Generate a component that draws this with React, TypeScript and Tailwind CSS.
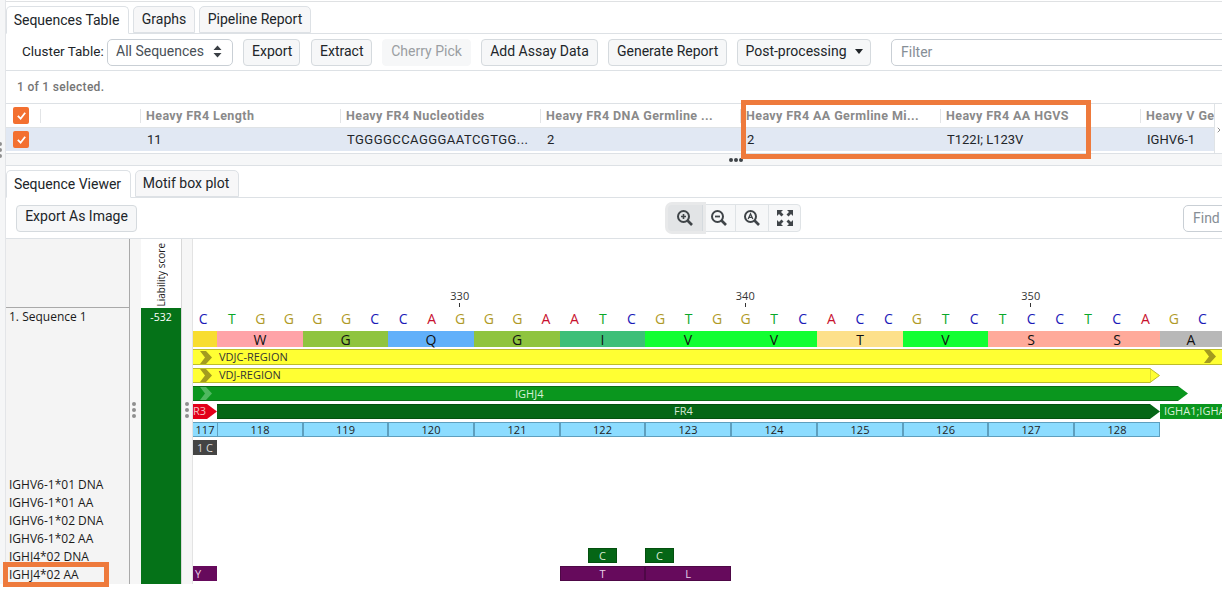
import { ChevronRight } from "lucide-react";

const nts = "CTGGGGCCAGGGAATCGTGGTCACCGTCTCCTCAGC".split("");
const ntColor: any = { C: "text-[#1a1ab8]", T: "text-[#0aa82a]", G: "text-[#b09a28]", A: "text-[#c8102e]" };

const aminoAcids = [
  { label: "", w: "w-[24px]", color: "bg-[#f8dd30]" },
  { label: "W", w: "w-[86px]", color: "bg-[#ffa3a8]" },
  { label: "G", w: "w-[85px]", color: "bg-[#8fc43f]" },
  { label: "Q", w: "w-[86px]", color: "bg-[#61b0fa]" },
  { label: "G", w: "w-[86px]", color: "bg-[#8fc43f]" },
  { label: "I", w: "w-[85px]", color: "bg-[#3ebf78]" },
  { label: "V", w: "w-[86px]", color: "bg-[#12ff32]" },
  { label: "V", w: "w-[86px]", color: "bg-[#12ff32]" },
  { label: "T", w: "w-[86px]", color: "bg-[#fde08a]" },
  { label: "V", w: "w-[85px]", color: "bg-[#12ff32]" },
  { label: "S", w: "w-[86px]", color: "bg-[#ffaa9a]" },
  { label: "S", w: "w-[86px]", color: "bg-[#ffaa9a]" },
  { label: "A", w: "w-[62px]", color: "bg-[#b8b8b8]" },
];

const numbers = [
  { n: 118, w: "w-[86px]" },
  { n: 119, w: "w-[85px]" },
  { n: 120, w: "w-[86px]" },
  { n: 121, w: "w-[86px]" },
  { n: 122, w: "w-[85px]" },
  { n: 123, w: "w-[86px]" },
  { n: 124, w: "w-[86px]" },
  { n: 125, w: "w-[86px]" },
  { n: 126, w: "w-[85px]" },
  { n: 127, w: "w-[86px]" },
  { n: 128, w: "w-[86px]" },
];

const germlines = ["IGHV6-1*01 DNA", "IGHV6-1*01 AA", "IGHV6-1*02 DNA", "IGHV6-1*02 AA", "IGHJ4*02 DNA", "IGHJ4*02 AA"];

const Btn = ({ children, className = "", disabled = false }: any) => (
  <button className={`h-[27px] shrink-0 px-2 rounded-[4px] border text-[14px] whitespace-nowrap ${disabled ? "border-[#f6f7f8] bg-[#f6f7f8] text-[#9a9ea2]" : "border-[#d5dade] bg-[#f6f7f8] text-[#212529]"} ${className}`}>
    {children}
  </button>
);

const Tab = ({ children, active = false, className = "" }: any) => (
  <div className={`flex items-center justify-center rounded-t-[5px] border border-[#dde1e5] text-[14px] text-[#212529] ${active ? "bg-white border-b-white -mb-px h-[28px]" : "bg-[#f7f7f8] h-[27px]"} ${className}`}>
    {children}
  </div>
);

const Check = () => (
  <div className="w-[16px] h-[17px] rounded-[2px] bg-[#f37030] flex items-center justify-center">
    <svg width="11" height="11" viewBox="0 0 12 12">
      <path d="M2 6.5 L5 9.5 L10 3" fill="none" stroke="white" strokeWidth="2" />
    </svg>
  </div>
);

const Dots = ({ className = "" }: any) => (
  <div className={`flex flex-col gap-[2px] ${className}`}>
    <span className="w-[4px] h-[4px] rounded-full bg-[#8f8f8f]" />
    <span className="w-[4px] h-[4px] rounded-full bg-[#8f8f8f]" />
    <span className="w-[4px] h-[4px] rounded-full bg-[#8f8f8f]" />
  </div>
);

const Chevron = ({ color }: any) => (
  <svg width="12" height="13" viewBox="0 0 12 13" className="shrink-0">
    <path d="M0 0 H6 L12 6.5 L6 13 H0 L5 6.5 Z" fill={color} />
  </svg>
);

const Magnifier = ({ kind }: any) => (
  <svg width="18" height="18" viewBox="0 0 18 18" fill="none" stroke="#3f4448">
    <circle cx="7.5" cy="7.5" r="5.5" strokeWidth="2" />
    <path d="M11.5 11.5 L16 16" strokeWidth="2.6" />
    {kind === "in" && <path d="M5 7.5 H10 M7.5 5 V10" strokeWidth="1.6" />}
    {kind === "out" && <path d="M5 7.5 H10" strokeWidth="1.8" />}
    {kind === "fit" && <path d="M5.2 10 L7.5 4.8 L9.8 10 M6 8.4 H9" strokeWidth="1.3" />}
  </svg>
);

const Expand = () => (
  <svg width="18" height="18" viewBox="0 0 18 18" fill="#3f4448">
    <path d="M1 1 H7 L5 3 L7.5 5.5 L5.5 7.5 L3 5 L1 7 Z" />
    <path d="M17 1 H11 L13 3 L10.5 5.5 L12.5 7.5 L15 5 L17 7 Z" />
    <path d="M1 17 H7 L5 15 L7.5 12.5 L5.5 10.5 L3 13 L1 11 Z" />
    <path d="M17 17 H11 L13 15 L10.5 12.5 L12.5 10.5 L15 13 L17 11 Z" />
  </svg>
);

const HeaderCell = ({ children }: any) => (
  <div className="w-[200px] shrink-0 h-[14px] border-l border-[#e2e4e6] pl-[5px] pt-[2px] flex items-center text-[12.5px] font-bold tracking-[0.4px] text-[#8a8a8a] whitespace-nowrap">
    {children}
  </div>
);

const BodyCell = ({ children, className = "" }: any) => (
  <div className={`w-[200px] shrink-0 pl-[7px] text-[13px] text-[#212529] whitespace-nowrap ${className}`}>{children}</div>
);

export default function App() {
  return (
    <div className="relative w-[1222px] h-[601px] overflow-hidden bg-white font-['Roboto',sans-serif]">
      <div className="flex h-[584px]">
        <div className="w-[6px] shrink-0 bg-[#f5f6f7] border-r border-[#e3e5e8]" />
        <div className="flex-1 min-w-0 flex flex-col">
          <div className="mt-[1px] border-t border-[#dfe1e3]" />

          {/* top tabs */}
          <div className="h-[32px] flex items-end gap-[4px] border-b border-[#dde1e5] shrink-0">
            <Tab active className="w-[123px] pr-[2px]">Sequences Table</Tab>
            <Tab className="w-[62px]">Graphs</Tab>
            <Tab className="w-[112px]">Pipeline Report</Tab>
          </div>

          {/* toolbar */}
          <div className="h-[37px] flex items-center border-b border-[#dde1e5] shrink-0">
            <span className="ml-[16px] w-[85px] shrink-0 text-[13.5px] text-[#212529] whitespace-nowrap pb-[2px]">Cluster Table:</span>
            <div className="w-[126px] shrink-0 h-[27px] rounded-[5px] border border-[#c9cfd5] flex items-center pl-[8px] pb-[2px] text-[14px] text-[#495057]">
              All Sequences
              <svg width="9" height="13" viewBox="0 0 9 13" className="ml-[9px]" fill="#3a3f44">
                <path d="M4.5 0.5 L8.5 5 H0.5 Z M4.5 12.5 L0.5 8 H8.5 Z" />
              </svg>
            </div>
            <div className="flex gap-[10px] ml-[10px] shrink-0">
              <Btn className="w-[57px] pb-[2px]">Export</Btn>
              <Btn className="w-[61px] ml-[1px] pb-[2px]">Extract</Btn>
              <Btn disabled className="w-[89px] pb-[2px]">Cherry Pick</Btn>
              <Btn className="w-[117px] pb-[2px]">Add Assay Data</Btn>
              <Btn className="w-[119px] pb-[2px]">Generate Report</Btn>
              <Btn className="w-[134px] pb-[2px] flex items-center justify-center gap-[8px]">
                Post-processing
                <span className="w-0 h-0 border-x-[4px] border-x-transparent border-t-[5px] border-t-[#212529]" />
              </Btn>
            </div>
            <div className="ml-[20px] w-[340px] shrink-0 h-[27px] rounded-[5px] border border-[#c9cfd5] pl-[9px] flex items-center text-[14px] text-[#868e96]">
              Filter
            </div>
          </div>

          <div className="h-[33px] flex items-center pl-[11px] text-[12px] font-medium tracking-[0.3px] text-[#757575] border-b border-[#dde1e5] shrink-0">
            1 of 1 selected.
          </div>

          {/* table */}
          <div className="relative h-[50px] shrink-0 overflow-hidden border-b border-[#dde1e5]">
            <div className="h-[24px] flex items-center border-b border-[#dfe3e6]">
              <div className="w-[34px] shrink-0 pl-[7px]"><Check /></div>
              <div className="w-[100px] shrink-0 h-[14px] border-l border-[#e2e4e6]" />
              <HeaderCell>Heavy FR4 Length</HeaderCell>
              <HeaderCell>Heavy FR4 Nucleotides</HeaderCell>
              <HeaderCell>Heavy FR4 DNA Germline ...</HeaderCell>
              <HeaderCell>Heavy FR4 AA Germline Mi...</HeaderCell>
              <HeaderCell>Heavy FR4 AA HGVS</HeaderCell>
              <HeaderCell>Heavy V Ge</HeaderCell>
            </div>
            <div className="h-[23px] flex items-center bg-[#e1e8f3]">
              <div className="w-[134px] shrink-0 pl-[7px]"><Check /></div>
              <BodyCell>11</BodyCell>
              <BodyCell className="tracking-[0.45px]">TGGGGCCAGGGAATCGTGG...</BodyCell>
              <BodyCell>2</BodyCell>
              <BodyCell>2</BodyCell>
              <BodyCell>T122I; L123V</BodyCell>
              <BodyCell>IGHV6-1</BodyCell>
            </div>
            <div className="absolute right-0 top-0 bottom-0 w-[8px] bg-white border-l border-[#dfe3e6] flex flex-col items-center pt-[22px]">
              <ChevronRight size={8} className="text-[#555]" />
            </div>
          </div>

          {/* splitter */}
          <div className="relative h-[12px] bg-[#f6f7f8] border-b border-[#dde1e5] shrink-0">
            <div className="absolute left-[723px] top-[4px] flex gap-[1px]">
              <span className="w-[4px] h-[4px] rounded-full bg-[#3f4448]" />
              <span className="w-[4px] h-[4px] rounded-full bg-[#3f4448]" />
              <span className="w-[4px] h-[4px] rounded-full bg-[#3f4448]" />
            </div>
          </div>

          {/* bottom tabs */}
          <div className="h-[32px] flex items-end gap-[4px] border-b border-[#dde1e5] shrink-0">
            <Tab active className="w-[125px] pr-[2px]">Sequence Viewer</Tab>
            <Tab className="w-[104px] pr-[2px]">Motif box plot</Tab>
          </div>

          {/* viewer toolbar */}
          <div className="h-[41px] flex items-center border-b border-[#dde1e5] shrink-0">
            <Btn className="ml-[10px] w-[121px] pb-[4px]">Export As Image</Btn>
            <div className="ml-[530px] shrink-0 flex h-[28px] w-[134px] rounded-[4px] border border-[#dfe3e6] bg-[#f6f7f8]">
              <div className="w-[35px] flex items-center justify-center bg-[#e2e4e6] border-r border-[#d5dade] rounded-l-[4px] ring-[3px] ring-[#e8e9ea]"><Magnifier kind="in" /></div>
              <div className="w-[33px] flex items-center justify-center border-r border-[#dfe3e6]"><Magnifier kind="out" /></div>
              <div className="w-[33px] flex items-center justify-center border-r border-[#dfe3e6]"><Magnifier kind="fit" /></div>
              <div className="flex-1 flex items-center justify-center"><Expand /></div>
            </div>
            <div className="ml-[382px] w-[60px] shrink-0 h-[27px] rounded-l-[5px] border border-[#c9cfd5] pl-[9px] flex items-center text-[14px] text-[#868e96]">
              Find
            </div>
          </div>

          {/* viewer */}
          <div className="flex-1 min-h-0 flex font-['Open_Sans',sans-serif]">
            <div className="w-[124px] shrink-0 bg-[#f4f4f4] border-r border-[#a9a9a9] flex flex-col text-[12px] text-[#1a1a1a]">
              <div className="h-[69px] border-b border-[#a9a9a9] shrink-0" />
              <div className="pl-[3px] pt-[1px] leading-[16px]">1. Sequence 1</div>
              <div className="mt-[151px] pl-[3px] flex flex-col">
                {germlines.map((g) => (
                  <div key={g} className="h-[18px] leading-[18px] whitespace-nowrap">{g}</div>
                ))}
              </div>
            </div>

            <div className="w-[11px] shrink-0 bg-[#f6f6f6] flex items-center pl-[2px]">
              <Dots className="mt-[-4px]" />
            </div>

            <div className="w-[41px] shrink-0 flex flex-col border-r border-[#d8d8d8]">
              <div className="h-[69px] shrink-0 flex items-end justify-center pb-[2px]">
                <span className="[writing-mode:vertical-rl] rotate-180 text-[10px] leading-[12px] text-[#1a1a1a] whitespace-nowrap">Liability score</span>
              </div>
              <div className="flex-1 bg-[#057218] text-white text-[10.5px] text-center pt-[1px] leading-[16px]">-532</div>
            </div>

            <div className="w-[11px] shrink-0 bg-[#f6f6f6] border-r border-[#e3e3e3] flex items-center justify-center">
              <Dots className="mt-[-4px]" />
            </div>

            {/* tracks */}
            <div className="flex-1 min-w-0 overflow-hidden flex flex-col pt-[49px]">
              <div className="h-[20px] flex pl-[124px] shrink-0 text-[11px] text-[#333]">
                <div className="w-[285.5px] flex flex-col items-center">
                  <span className="leading-[15px]">330</span>
                  <span className="w-px h-[4px] bg-[#333]" />
                </div>
                <div className="w-[285.5px] flex flex-col items-center">
                  <span className="leading-[15px]">340</span>
                  <span className="w-px h-[4px] bg-[#333]" />
                </div>
                <div className="w-[285.5px] flex flex-col items-center">
                  <span className="leading-[15px]">350</span>
                  <span className="w-px h-[4px] bg-[#333]" />
                </div>
              </div>

              <div className="h-[23px] flex shrink-0 -ml-[4px] items-center pb-[2px]">
                {nts.map((n, i) => (
                  <div key={i} className={`w-[28.55px] shrink-0 text-center text-[14px] leading-[18px] ${ntColor[n]}`}>{n}</div>
                ))}
              </div>

              <div className="h-[16px] flex shrink-0">
                {aminoAcids.map((a, i) => (
                  <div key={i} className={`${a.w} ${a.color} shrink-0 text-center text-[14px] pt-[1px] leading-[16px] text-[#111]`}>{a.label}</div>
                ))}
              </div>

              <div className="mt-[2px] h-[16px] flex shrink-0 items-center bg-[#ffff33] border-y border-[#bdbd2a] text-[11px] text-[#333] pl-[7px] gap-[7px] relative">
                <Chevron color="#a39b1f" />
                <span className="leading-[13px] mb-[2px]">VDJC-REGION</span>
                <span className="absolute right-[6px] top-0"><Chevron color="#a39b1f" /></span>
              </div>

              <div className="mt-[3px] h-[15px] flex shrink-0 w-[967px]">
                <div className="w-[957px] flex items-center bg-[#ffff33] border-y border-[#bdbd2a] text-[11px] text-[#333] pl-[7px] gap-[7px]">
                  <Chevron color="#a39b1f" />
                  <span className="leading-[13px] mb-[2px]">VDJ-REGION</span>
                </div>
                <svg width="10" height="15" viewBox="0 0 10 15"><path d="M0 0.5 L9.5 7.5 L0 14.5 Z" fill="#ffff33" stroke="#bdbd2a" /></svg>
              </div>

              <div className="mt-[3px] h-[15px] flex shrink-0 w-[995px]">
                <div className="relative w-[985px] flex items-center bg-[#0a961e] border-y border-[#0a6b18] text-[11px] text-[#d8f0d8] pl-[322px]">
                  <span className="absolute left-[7px] top-0"><Chevron color="#4fb860" /></span>
                  <span className="leading-[13px]">IGHJ4</span>
                </div>
                <svg width="10" height="15" viewBox="0 0 10 15"><path d="M0 0 L10 7.5 L0 15 Z" fill="#0a961e" /></svg>
              </div>

              <div className="mt-[3px] h-[15px] flex shrink-0 text-[11px]">
                <div className="w-[14px] bg-[#e2001a] text-[#f3c0c5] leading-[13px] overflow-hidden whitespace-nowrap">R3</div>
                <svg width="10" height="15" viewBox="0 0 10 15" className="shrink-0"><path d="M0 0 L10 7.5 L0 15 Z" fill="#e2001a" /></svg>
                <div className="w-[933px] shrink-0 bg-[#056616] border-y border-[#04500f] text-[#d8e8d8] text-center leading-[11px]">FR4</div>
                <svg width="10" height="15" viewBox="0 0 10 15" className="shrink-0"><path d="M0 0 L10 7.5 L0 15 Z" fill="#056616" /></svg>
                <div className="flex-1 min-w-0 bg-[#0a961e] text-[#d8f0d8] leading-[13px] pl-[4px] whitespace-nowrap overflow-hidden">IGHA1;IGHA2</div>
              </div>

              <div className="mt-[3px] h-[15px] flex shrink-0 text-[11px] text-[#222]">
                <div className="w-[24px] shrink-0 bg-[#8cdcff] border-y border-[#5e9fbe] text-center leading-[13px]">117</div>
                {numbers.map((c) => (
                  <div key={c.n} className={`${c.w} shrink-0 bg-[#8cdcff] border border-[#5e9fbe] text-center leading-[13px]`}>{c.n}</div>
                ))}
              </div>

              <div className="mt-[3px] w-[24px] h-[15px] bg-[#444] text-[#ddd] text-[11px] leading-[15px] text-center shrink-0">1 C</div>

              <div className="mt-[93px] ml-[395px] flex shrink-0">
                <div className="w-[29px] h-[15px] bg-[#056616] border border-[#04500f] text-[#d8e8d8] text-[11px] leading-[13px] text-center">C</div>
                <div className="ml-[28px] w-[29px] h-[15px] bg-[#056616] border border-[#04500f] text-[#d8e8d8] text-[11px] leading-[13px] text-center">C</div>
              </div>

              <div className="mt-[3px] flex shrink-0 text-[11px] text-[#e8d0e8]">
                <div className="w-[24px] h-[15px] bg-[#660a5c] leading-[15px] pl-[2px]">Y</div>
                <div className="ml-[343px] w-[85px] h-[15px] bg-[#660a5c] border border-[#4e0846] leading-[13px] text-center">T</div>
                <div className="w-[86px] h-[15px] bg-[#660a5c] border border-[#4e0846] leading-[13px] text-center">L</div>
              </div>
            </div>
          </div>
        </div>
      </div>

      {/* orange highlight boxes */}
      <div className="absolute left-[741px] top-[100px] w-[350px] h-[59px] border-[5px] border-[#ee7a3c]" />
      <div className="absolute left-[3px] top-[562px] w-[106px] h-[25px] border-[5px] border-[#ee7a3c]" />
      <Dots className="absolute left-[-2px] top-[142px]" />
    </div>
  );
}
